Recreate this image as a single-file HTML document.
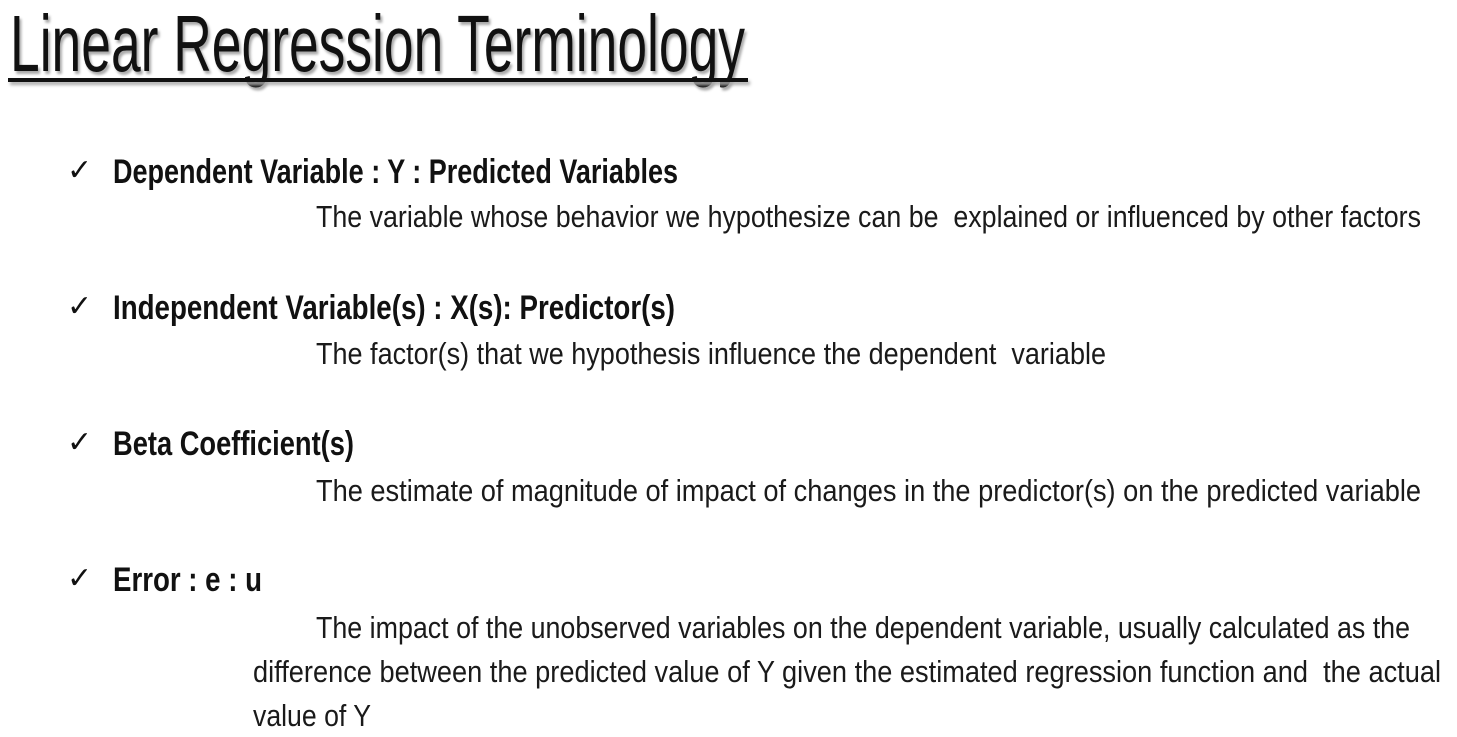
<!DOCTYPE html>
<html><head><meta charset="utf-8"><style>
html,body{margin:0;padding:0;background:#fff;width:1457px;height:737px;overflow:hidden;position:relative}
.t{position:absolute;white-space:nowrap;line-height:1;font-family:"Liberation Sans Narrow","Liberation Sans",sans-serif;color:#111;transform-origin:0 0}
.h{font-weight:bold;font-size:34px}
.d{font-size:31px;color:#1a1a1a}
.ck{position:absolute;font-family:"DejaVu Sans",sans-serif;font-size:30px;line-height:1;color:#111}
#title{font-size:80px;text-shadow:3px 3px 3px #aaa}
#ul{position:absolute;left:8px;top:78px;width:740px;height:4px;background:#111;box-shadow:2px 3px 3px #aaa}
</style></head><body>
<div class="t" id="title" style="left:10px;top:4px">Linear Regression Terminology</div>
<div id="ul"></div>

<div class="ck" style="left:67px;top:156px">✓</div>
<div class="t h" style="left:113px;top:155px">Dependent Variable : Y : Predicted Variables</div>
<div class="t d" style="left:316px;top:201px">The variable whose behavior we hypothesize can be&nbsp; explained or influenced by other factors</div>

<div class="ck" style="left:67px;top:292px">✓</div>
<div class="t h" style="left:113px;top:291px">Independent Variable(s) : X(s): Predictor(s)</div>
<div class="t d" style="left:316px;top:338px">The factor(s) that we hypothesis influence the dependent&nbsp; variable</div>

<div class="ck" style="left:67px;top:428px">✓</div>
<div class="t h" style="left:113px;top:427px">Beta Coefficient(s)</div>
<div class="t d" style="left:316px;top:475px">The estimate of magnitude of impact of changes in the predictor(s) on the predicted variable</div>

<div class="ck" style="left:67px;top:564px">✓</div>
<div class="t h" style="left:113px;top:563px">Error : e : u</div>
<div class="t d" style="left:316px;top:612px">The impact of the unobserved variables on the dependent variable, usually calculated as the</div>
<div class="t d" style="left:253px;top:656px">difference between the predicted value of Y given the estimated regression function and&nbsp; the actual</div>
<div class="t d" style="left:253px;top:700px">value of Y</div>

<script>
var targets=[735,565,1105,562,790,241,1105,149,1094,1188,118];
var els=document.querySelectorAll('.t');
for(var i=0;i<els.length;i++){
  var w=els[i].getBoundingClientRect().width;
  var s=targets[i]/w;
  els[i].style.transform='scaleX('+s+')';
}
</script>
</body></html>
